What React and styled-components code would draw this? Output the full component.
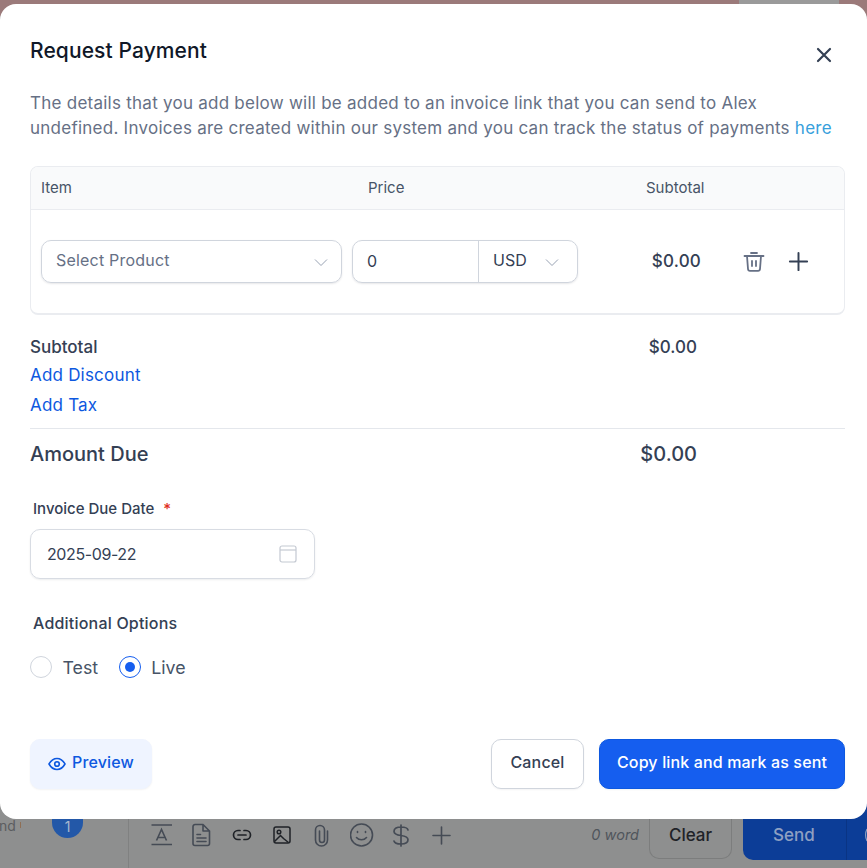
import React from "react";
import styled, { createGlobalStyle } from "styled-components";

const Global = createGlobalStyle`
  html, body { margin: 0; padding: 0; height: 868px; overflow: hidden; background: #8e8f8f; }
  #root { height: 868px; overflow: hidden; }
  * { box-sizing: border-box; }
`;

const Page = styled.div`
  width: 867px;
  height: 868px;
  display: flex;
  flex-direction: column;
  font-family: Inter, "Liberation Sans", sans-serif;
  color: #344054;
  background: #8e8f8f;
  overflow: hidden;
`;
const TopStrip = styled.div`
  height: 16px;
  margin-bottom: -12px;
  background: #9b7a7a;
  display: flex;
  justify-content: flex-end;
  padding-right: 28px;
  flex: none;
`;
const StripPatch = styled.div`
  width: 100px;
  background: #9a9a9a;
`;
const Modal = styled.div`
  position: relative;
  z-index: 1;
  height: 815px;
  margin-bottom: -16px;
  flex: none;
  background: #fff;
  border-radius: 16px;
  padding: 0 22px 0 30px;
  display: flex;
  flex-direction: column;
`;
const Head = styled.div`
  height: 84px;
  flex: none;
  display: flex;
  justify-content: space-between;
  padding-top: 33px;
`;
const Title = styled.h2`
  margin: 0;
  font-size: 21px;
  line-height: 28px;
  font-weight: 500;
  letter-spacing: 0.1px;
  color: #101828;
`;
const CloseBtn = styled.button`
  all: unset;
  width: 24px;
  height: 24px;
  margin: 6px 9px 0 0;
  color: #344054;
  display: flex;
`;
const Desc = styled.p`
  margin: 0;
  height: 78px;
  flex: none;
  font-size: 17px;
  line-height: 25px;
  letter-spacing: 0.25px;
  color: #667085;
  padding-top: 3px;
`;
const Here = styled.span`
  color: #37a0dc;
`;
const TableCard = styled.div`
  height: 149px;
  flex: none;
  border: 1px solid #eaecf0;
  border-bottom-width: 2px;
  border-radius: 8px;
  display: flex;
  flex-direction: column;
  overflow: hidden;
`;
const TableHead = styled.div`
  height: 43px;
  flex: none;
  background: #f9fafb;
  border-bottom: 1px solid #eaecf0;
  display: grid;
  grid-template-columns: 327px 278px auto;
  align-items: center;
  padding: 0 0 2px 10px;
  font-size: 15px;
  color: #475467;
`;
const TableRow = styled.div`
  flex: 1;
  display: flex;
  align-items: flex-start;
  padding: 30px 0 0 10px;
`;
const SelectBox = styled.div`
  width: 301px;
  height: 43px;
  flex: none;
  border: 1px solid #d0d5dd;
  border-radius: 10px;
  box-shadow: 0 1px 2px rgba(16, 24, 40, 0.1);
  display: flex;
  align-items: center;
  justify-content: space-between;
  padding: 0 12px 3px 14px;
  font-size: 16px;
  letter-spacing: 0.2px;
  color: #667085;
`;
const PriceGroup = styled.div`
  margin-left: 10px;
  width: 226px;
  height: 43px;
  flex: none;
  border: 1px solid #d0d5dd;
  border-radius: 10px;
  box-shadow: 0 1px 2px rgba(16, 24, 40, 0.1);
  display: flex;
  font-size: 16px;
  color: #344054;
`;
const PriceValue = styled.div`
  width: 126px;
  padding: 0 0 1px 14px;
  display: flex;
  align-items: center;
  border-right: 1px solid #d0d5dd;
`;
const Currency = styled.div`
  flex: 1;
  display: flex;
  align-items: center;
  justify-content: space-between;
  padding: 0 17px 3px 14px;
`;
const RowTotal = styled.div`
  width: 123px;
  height: 43px;
  flex: none;
  display: flex;
  align-items: center;
  justify-content: flex-end;
  padding-bottom: 2px;
  font-size: 17px;
  font-weight: 500;
  letter-spacing: 0.2px;
  color: #344054;
`;
const RowIcons = styled.div`
  margin-left: 41px;
  height: 43px;
  display: flex;
  align-items: center;
  gap: 21px;
  color: #344054;
`;
const SummaryRow = styled.div`
  display: flex;
  justify-content: space-between;
  align-items: center;
  height: ${(p) => p.$h}px;
  margin-top: ${(p) => p.$top || 0}px;
  flex: none;
  padding-right: 148px;
  font-size: ${(p) => p.$size}px;
  font-weight: 500;
  color: #344054;
`;
const AddLink = styled.div`
  height: 30px;
  margin-top: ${(p) => p.$top || 0}px;
  flex: none;
  display: flex;
  align-items: center;
  font-size: 17px;
  letter-spacing: 0.2px;
  color: #0d58e0;
`;
const Rule = styled.div`
  height: 1px;
  flex: none;
  background: #e4e7ec;
  margin-top: 8px;
`;
const FieldLabel = styled.div`
  margin: ${(p) => p.$top}px 0 0 3px;
  height: 20px;
  flex: none;
  font-size: ${(p) => p.$size}px;
  line-height: 20px;
  font-weight: 500;
  letter-spacing: ${(p) => p.$track || 0}px;
  color: #344054;
  display: flex;
  gap: 9px;
`;
const Star = styled.span`
  color: #e02d20;
`;
const DateBox = styled.div`
  margin-top: 10px;
  width: 285px;
  height: 50px;
  flex: none;
  border: 1px solid #d8dce3;
  border-radius: 10px;
  box-shadow: 0 1px 2px rgba(16, 24, 40, 0.08);
  display: flex;
  align-items: center;
  justify-content: space-between;
  padding: 0 17px 0 16px;
  font-size: 16px;
  letter-spacing: -0.4px;
  color: #344054;
`;
const RadioRow = styled.div`
  margin-top: 22px;
  height: 24px;
  flex: none;
  display: flex;
  align-items: center;
  font-size: 17.8px;
  color: #475467;
`;
const RadioItem = styled.label`
  display: flex;
  align-items: center;
  gap: 10.5px;
  margin-right: 20.5px;
`;
const RadioDot = styled.span`
  width: 22px;
  height: 22px;
  border-radius: 50%;
  border: 1px solid ${(p) => (p.$on ? "#155eef" : "#d0d5dd")};
  display: flex;
  align-items: center;
  justify-content: center;
  &::after {
    content: "";
    width: 10px;
    height: 10px;
    border-radius: 50%;
    background: ${(p) => (p.$on ? "#155eef" : "transparent")};
  }
`;
const Footer = styled.div`
  margin-top: 60px;
  display: flex;
  justify-content: space-between;
  flex: none;
`;
const Actions = styled.div`
  display: flex;
  gap: 15px;
`;
const Btn = styled.button`
  all: unset;
  box-sizing: border-box;
  height: 50px;
  padding-bottom: 4px;
  display: flex;
  align-items: center;
  justify-content: center;
  gap: 6px;
  width: ${(p) => p.$w}px;
  border-radius: 10px;
  font-family: Inter, "Liberation Sans", sans-serif;
  font-size: 16px;
  font-weight: 500;
  letter-spacing: 0.15px;
  border: 1px solid ${(p) => p.$border};
  background: ${(p) => p.$bg};
  color: ${(p) => p.$color};
  box-shadow: 0 1px 2px rgba(16, 24, 40, 0.05);
`;
const EyeIcon = styled.svg`
  margin-top: 4px;
`;
const ChevronIcon = styled.svg`
  margin-top: 3px;
`;
const BottomBar = styled.div`
  height: 65px;
  flex: none;
  display: flex;
  background: #8e8f8f;
`;
const SideCol = styled.div`
  width: 129px;
  flex: none;
  border-right: 1px solid #808181;
  position: relative;
  font-size: 14px;
  color: #5b5d60;
`;
const SideText = styled.span`
  position: absolute;
  left: -1px;
  top: 14px;
`;
const SideTick = styled.span`
  position: absolute;
  left: 20px;
  top: 19px;
  width: 1px;
  height: 6px;
  background: #8f6f55;
`;
const CountBadge = styled.span`
  position: absolute;
  left: 52px;
  top: 0;
  width: 31px;
  height: 35px;
  border-radius: 0 0 16px 16px;
  background: #2358a8;
  color: #a9b8cf;
  font-size: 14px;
  display: flex;
  align-items: flex-end;
  justify-content: center;
  padding-bottom: 3px;
`;
const ToolRow = styled.div`
  flex: 1;
  display: flex;
  align-items: flex-start;
  padding-left: 21px;
  color: #454b55;
`;
const ToolIcons = styled.div`
  display: flex;
  align-items: center;
  margin-top: 20px;
  height: 24px;
  gap: 16px;
`;
const WordCount = styled.span`
  margin-left: auto;
  margin-top: 23px;
  font-size: 14.5px;
  line-height: 18px;
  font-style: italic;
  color: #50555c;
`;
const ClearBtn = styled.div`
  margin: 0 11px 0 10px;
  width: 83px;
  height: 56px;
  border: 1px solid #7c7d7d;
  border-top: none;
  border-radius: 0 0 10px 10px;
  display: flex;
  align-items: center;
  justify-content: center;
  padding-top: 8px;
  font-size: 17px;
  font-weight: 500;
  color: #1f2227;
`;
const SendGroup = styled.div`
  width: 124px;
  height: 57px;
  flex: none;
  border-radius: 0 0 0 10px;
  background: #0c3d97;
  display: flex;
`;
const SendMain = styled.div`
  width: 104px;
  flex: none;
  border-right: 1px solid #0a3484;
  display: flex;
  align-items: center;
  padding: 7px 0 0 30px;
  font-size: 17px;
  font-weight: 500;
  color: #8fa0c2;
`;
const SendMore = styled.div`
  flex: 1;
  display: flex;
  align-items: center;
  justify-content: flex-end;
  padding-top: 7px;
`;

const Chevron = ({ color = "#98a2b3" }) => (
  <ChevronIcon width="16" height="16" viewBox="0 0 16 16" fill="none" stroke={color} strokeWidth="1">
    <path d="M2 5.5l6 6 6-6" />
  </ChevronIcon>
);
const Plus = ({ size = 23, sw = 1.7 }) => (
  <svg width={size} height={size} viewBox="0 0 20 20" fill="none" stroke="currentColor" strokeWidth={sw} strokeLinecap="round">
    <path d="M10 2.5v15M2.5 10h15" />
  </svg>
);

export default function App() {
  return (
    <Page>
      <Global />
      <TopStrip>
        <StripPatch />
      </TopStrip>
      <Modal>
        <Head>
          <Title>Request Payment</Title>
          <CloseBtn aria-label="Close">
            <svg width="24" height="24" viewBox="0 0 24 24" fill="none" stroke="currentColor" strokeWidth="2.2" strokeLinecap="round">
              <path d="M6 6l12 12M18 6L6 18" />
            </svg>
          </CloseBtn>
        </Head>
        <Desc>
          The details that you add below will be added to an invoice link that you can send to Alex undefined. Invoices are created within our system and you can track the status of payments <Here>here</Here>
        </Desc>
        <TableCard>
          <TableHead>
            <span>Item</span>
            <span>Price</span>
            <span>Subtotal</span>
          </TableHead>
          <TableRow>
            <SelectBox>
              Select Product
              <Chevron />
            </SelectBox>
            <PriceGroup>
              <PriceValue>0</PriceValue>
              <Currency>
                USD
                <Chevron />
              </Currency>
            </PriceGroup>
            <RowTotal>$0.00</RowTotal>
            <RowIcons>
              <svg width="24" height="24" viewBox="0 0 24 24" fill="none" stroke="#667085" strokeWidth="1.8" strokeLinecap="round" strokeLinejoin="round">
                <path d="M2.5 6h19M9 3h6M5 6l1 13a2 2 0 0 0 2 1.8h8a2 2 0 0 0 2-1.8l1-13M10 11v5M14 11v5" />
              </svg>
              <Plus />
            </RowIcons>
          </TableRow>
        </TableCard>
        <SummaryRow $h={42} $size={17} $top={11}>
          <span>Subtotal</span>
          <span>$0.00</span>
        </SummaryRow>
        <AddLink $top={-8}>Add Discount</AddLink>
        <AddLink>Add Tax</AddLink>
        <Rule />
        <SummaryRow $h={50} $size={20}>
          <span>Amount Due</span>
          <span>$0.00</span>
        </SummaryRow>
        <FieldLabel $top={20} $size={15}>
          Invoice Due Date <Star>*</Star>
        </FieldLabel>
        <DateBox>
          2025-09-22
          <svg width="18" height="18" viewBox="0 0 18 18" fill="none" stroke="#c4c9d2" strokeWidth="1.2">
            <rect x="1" y="1" width="16" height="16" rx="2" />
            <path d="M1 5h16" />
          </svg>
        </DateBox>
        <FieldLabel $top={34} $size={16} $track={0.2}>Additional Options</FieldLabel>
        <RadioRow>
          <RadioItem>
            <RadioDot />
            Test
          </RadioItem>
          <RadioItem>
            <RadioDot $on />
            Live
          </RadioItem>
        </RadioRow>
        <Footer>
          <Btn $w={122} $bg="#eff4ff" $border="#eff4ff" $color="#0d58e0">
            <EyeIcon width="18" height="18" viewBox="0 0 18 18" fill="none" stroke="currentColor" strokeWidth="1.6" strokeLinejoin="round">
              <path d="M1 9C3 5.5 6 3.5 9 3.5s6 2 8 5.5c-2 3.5-5 5.5-8 5.5S3 12.5 1 9z" />
              <circle cx="9" cy="9" r="2.3" />
            </EyeIcon>
            Preview
          </Btn>
          <Actions>
            <Btn $w={93} $bg="#fff" $border="#d0d5dd" $color="#344054">Cancel</Btn>
            <Btn $w={246} $bg="#155eef" $border="#0d58e0" $color="#fff">Copy link and mark as sent</Btn>
          </Actions>
        </Footer>
      </Modal>
      <BottomBar>
        <SideCol>
          <SideText>nd</SideText>
          <SideTick />
          <CountBadge>1</CountBadge>
        </SideCol>
        <ToolRow>
          <ToolIcons>
            <svg width="24" height="24" viewBox="0 0 24 24" fill="none" stroke="currentColor" strokeWidth="1.6">
              <path d="M1.5 2h20.5M1.5 21.5h20.5M6.5 17.5l5-11 5 11M8 14.5h7" />
            </svg>
            <svg width="24" height="24" viewBox="0 0 24 24" fill="none" stroke="currentColor" strokeWidth="1.6" strokeLinejoin="round" strokeLinecap="round">
              <path d="M5 1.5h8l6.5 6.5v12.5a2 2 0 0 1-2 2H5a2 2 0 0 1-2-2v-17a2 2 0 0 1 2-2zM13 1.5V8h6.5M7 11.5h3.5M7 15h9M7 18.5h9" />
            </svg>
            <svg width="24" height="24" viewBox="0 0 24 24" fill="none" stroke="#1f2227" strokeWidth="1.7" strokeLinecap="round">
              <path d="M10 7.5H8a4.5 4.5 0 0 0 0 9h2M14 7.5h2a4.5 4.5 0 0 1 0 9h-2M8 12h8" />
            </svg>
            <svg width="24" height="24" viewBox="0 0 24 24" fill="none" stroke="#1f2227" strokeWidth="1.5">
              <rect x="4" y="4" width="16" height="16" rx="2" />
              <circle cx="9" cy="9" r="1.8" />
              <path d="M4.5 18.5l6-6 3 3 5 4" />
            </svg>
            <svg width="24" height="24" viewBox="0 0 24 24" fill="none" stroke="currentColor" strokeWidth="1.6" strokeLinecap="round">
              <path d="M17.5 8v9a6 6 0 0 1-12 0V7a4.5 4.5 0 0 1 9 0v10a2.5 2.5 0 0 1-5 0V8" />
            </svg>
            <svg width="24" height="24" viewBox="0 0 24 24" fill="none" stroke="currentColor" strokeWidth="1.6" strokeLinecap="round">
              <circle cx="11.5" cy="12" r="11" />
              <path d="M6.5 14.5c2.5 3 7.5 3 10 0M7.5 8.5v1M15.5 8.5v1" />
            </svg>
            <svg width="24" height="24" viewBox="0 0 24 24" fill="none" stroke="currentColor" strokeWidth="1.7" strokeLinecap="round">
              <path d="M11 2v21M18 7c-.5-2-3-3-7-3C7 4 4 5.5 4 8.2 4 11 7 12 11 12.5c4 .5 7 1.5 7 4.3 0 2.7-3 4.2-7 4.2-4 0-6.5-1-7-3" />
            </svg>
            <svg width="24" height="24" viewBox="0 0 24 24" fill="none" stroke="currentColor" strokeWidth="1.6" strokeLinecap="round">
              <path d="M11.5 4v17M3 12.5h17" />
            </svg>
          </ToolIcons>
          <WordCount>0 word</WordCount>
          <ClearBtn>Clear</ClearBtn>
          <SendGroup>
            <SendMain>Send</SendMain>
            <SendMore>
              <svg width="2" height="14" viewBox="0 0 2 14" fill="none" stroke="#8fa0c2" strokeWidth="1.2">
                <path d="M2 1C1 3 .6 5 .6 7s.4 4 1.4 6" />
              </svg>
            </SendMore>
          </SendGroup>
        </ToolRow>
      </BottomBar>
    </Page>
  );
}
